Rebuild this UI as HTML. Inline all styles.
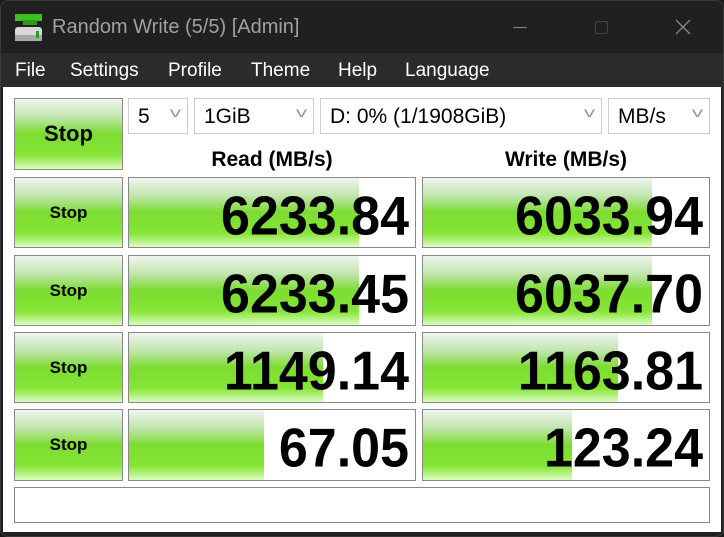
<!DOCTYPE html>
<html><head><style>
*{margin:0;padding:0;box-sizing:border-box}
body{width:724px;height:537px;background:#1b1b1b;position:relative;overflow:hidden;font-family:"Liberation Sans",sans-serif}
.win{position:absolute;left:0;top:0;width:724px;height:537px;background:#202020;border:1px solid #3a3a3a;border-radius:8px;overflow:hidden}
.title{position:absolute;left:51px;top:15px;color:#a0a0a0;font-size:20px}
.menu{position:absolute;left:0;top:52px;width:724px;height:35px;background:#2b2b2b;color:#fff;font-size:19px}
.menu span{position:absolute;top:7px}
.content{position:absolute;left:3px;top:87px;width:718px;height:445px;background:#fff}
.g{position:absolute;border:1px solid #888;background:#fff;overflow:hidden}
.fill{position:absolute;left:0;top:0;bottom:0;background:linear-gradient(#f0f5ee 0%,#c2e6b0 25%,#7cdc30 50%,#86e636 80%,#dcfcc0 100%)}
.btn{display:flex;align-items:center;justify-content:center;font-weight:bold;font-size:17px}
.btn .fill{right:0}
.btn b{position:relative}
.num{position:absolute;right:6px;top:7px;font-weight:bold;font-size:52px;letter-spacing:0;color:#000;transform:scaleY(1.05);transform-origin:right top}
.combo{position:absolute;top:98px;height:36px;border:1px solid #ccc;font-size:21px;padding:6px 0 0 9px;color:#000}
.combo i{position:absolute;right:8px;top:5px;font-style:normal;color:#999;font-size:14px;transform:scaleX(1.6)}
.hdr{position:absolute;top:148px;font-weight:bold;font-size:21px;text-align:center}
</style></head><body>
<div class="win">
<svg style="position:absolute;left:13px;top:12px" width="30" height="30"><rect x="1" y="1" width="27" height="7" fill="#3bc020"/><rect x="9" y="7" width="14" height="5" fill="#2a9a18"/><rect x="1" y="14" width="27" height="14" rx="3" fill="#d8d8d8"/><rect x="1" y="22" width="27" height="6" fill="#a8a8a8"/><rect x="22" y="18" width="3" height="7" fill="#2aa020"/></svg>
<div class="title">Random Write (5/5) [Admin]</div>
<div style="position:absolute;left:512px;top:26px;width:14px;height:1px;background:#888"></div>
<div style="position:absolute;left:594px;top:20px;width:13px;height:13px;border:1px solid #444;border-radius:2px"></div>
<svg style="position:absolute;left:674px;top:18px" width="16" height="16"><path d="M1 1L15 15M15 1L1 15" stroke="#888" stroke-width="1.3"/></svg>
<div class="menu"><span style="left:14px">File</span><span style="left:69px">Settings</span><span style="left:167px">Profile</span><span style="left:250px">Theme</span><span style="left:337px">Help</span><span style="left:404px">Language</span></div>
</div>
<div class="content"></div>
<div class="g btn" style="left:14px;top:98px;width:109px;height:72px;font-size:22px"><div class="fill"></div><b>Stop</b></div>
<div class="combo" style="left:128px;width:60px">5<i>v</i></div>
<div class="combo" style="left:194px;width:120px">1GiB<i>v</i></div>
<div class="combo" style="left:320px;width:282px">D: 0% (1/1908GiB)<i>v</i></div>
<div class="combo" style="left:608px;width:102px">MB/s<i>v</i></div>
<div class="hdr" style="left:128px;width:288px">Read (MB/s)</div>
<div class="hdr" style="left:422px;width:288px">Write (MB/s)</div>

<div class="g btn" style="left:14px;top:177px;width:109px;height:71px"><div class="fill"></div><b>Stop</b></div>
<div class="g" style="left:128px;top:177px;width:288px;height:71px"><div class="fill" style="width:230px"></div><div class="num">6233.84</div></div>
<div class="g" style="left:422px;top:177px;width:288px;height:71px"><div class="fill" style="width:229px"></div><div class="num">6033.94</div></div>

<div class="g btn" style="left:14px;top:255px;width:109px;height:71px"><div class="fill"></div><b>Stop</b></div>
<div class="g" style="left:128px;top:255px;width:288px;height:71px"><div class="fill" style="width:230px"></div><div class="num">6233.45</div></div>
<div class="g" style="left:422px;top:255px;width:288px;height:71px"><div class="fill" style="width:229px"></div><div class="num">6037.70</div></div>

<div class="g btn" style="left:14px;top:332px;width:109px;height:71px"><div class="fill"></div><b>Stop</b></div>
<div class="g" style="left:128px;top:332px;width:288px;height:71px"><div class="fill" style="width:194px"></div><div class="num">1149.14</div></div>
<div class="g" style="left:422px;top:332px;width:288px;height:71px"><div class="fill" style="width:195px"></div><div class="num">1163.81</div></div>

<div class="g btn" style="left:14px;top:409px;width:109px;height:72px"><div class="fill"></div><b>Stop</b></div>
<div class="g" style="left:128px;top:409px;width:288px;height:72px"><div class="fill" style="width:135px"></div><div class="num">67.05</div></div>
<div class="g" style="left:422px;top:409px;width:288px;height:72px"><div class="fill" style="width:149px"></div><div class="num">123.24</div></div>

<div class="g" style="left:14px;top:487px;width:696px;height:36px"></div>
</body></html>
